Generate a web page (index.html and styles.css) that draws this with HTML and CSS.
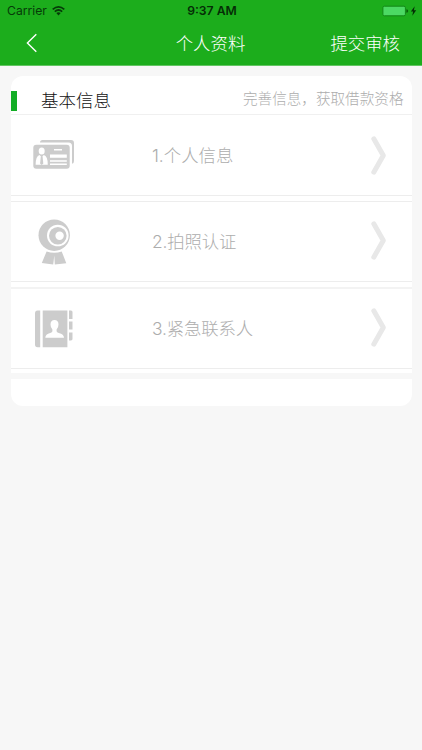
FILE: index.html
```
<!DOCTYPE html>
<html lang="zh-CN">
<head>
<meta charset="utf-8">
<title>个人资料</title>
<link rel="stylesheet" href="styles.css">
</head>
<body>
<header class="top">
  <div class="status">
    <div class="carrier"><span>Carrier</span>
      <svg width="13" height="10" viewBox="0 0 13 10" fill="none" stroke="#063b08" stroke-width="1.7"><path d="M.7 3.4Q6.5-1.6 12.3 3.4M2.8 5.6Q6.5 2.4 10.2 5.6"/><path d="M6.5 9.4 4.3 7.1Q6.5 5.3 8.7 7.1Z" fill="#063b08" stroke="none"/></svg>
    </div>
    <div class="time">9:37 AM</div>
    <svg class="battery" width="35" height="12" viewBox="0 0 35 12"><rect x=".9" y="1.2" width="22.5" height="9.6" rx="1.5" fill="#4cd964" stroke="#138718"/><path d="M24.4 4.2q1.8.3 1.8 1.8t-1.8 1.8z" fill="#075d0b"/><path d="M32.7 1.3 28.9 6.6h2.2l-.8 4.1 3.9-5.5h-2.3z" fill="#052d06"/></svg>
  </div>
  <nav class="nav">
    <svg class="back" width="12" height="20" viewBox="0 0 12 20" fill="none" stroke="#fff" stroke-width="1.4"><path d="M10.3 1.2 1.4 10l8.9 8.8"/></svg>
    <h1>个人资料</h1>
    <span class="submit">提交审核</span>
  </nav>
</header>
<main class="card">
  <div class="heading">
    <i class="mark"></i>
    <h2>基本信息</h2>
    <span class="hint">完善信息，获取借款资格</span>
  </div>
  <section class="row">
    <div class="icon"><svg width="42" height="32" viewBox="0 0 42 32"><path d="M7 3.5Q7 1 9.5 1H38q3 0 3 3v18q0 2.5-2 2.8V7q0-3.5-3.5-3.5z" fill="#ccc"/><rect x=".3" y="5.8" width="36.4" height="24" rx="3" fill="#ccc"/><g fill="#fff"><ellipse cx="8.7" cy="12.1" rx="3" ry="3.5"/><path d="M2.6 25.8q0-8.6 4-9.8l2.1 2.2 2.1-2.2q4 1.2 4 9.8z"/><path d="M21 10h8v1.6h-8zM17 15.4h16.8v3.4H17zM17 21.2h16.8v1.5H17zM17 24.5h16.8V26H17z"/></g><path d="m7.8 17.4-.7 7.2 1.6 1.3 1.6-1.3-.7-7.2z" fill="#ccc"/></svg></div>
    <span class="label">1.个人信息</span>
    <svg class="arrow" width="16" height="39" viewBox="0 0 16 39"><path d="m2.8 2.8 9.5 16.7-9.5 16.7"/></svg>
  </section>
  <section class="row second">
    <div class="icon"><svg width="42" height="46" viewBox="0 0 42 46"><circle cx="21.2" cy="16.2" r="15.7" fill="#ccc"/><circle cx="24.8" cy="16.5" r="10.8" fill="#fff"/><circle cx="24.8" cy="16.7" r="8.8" fill="#ccc"/><circle cx="26.6" cy="16.7" r="4.2" fill="#fff"/><path d="M13.6 32.4q7.7 2.6 15.1 0l4.6 11.8-11.5 1.2-.5-9-1.1 9L8.8 44z" fill="#ccc"/></svg></div>
    <span class="label">2.拍照认证</span>
    <svg class="arrow" width="16" height="39" viewBox="0 0 16 39"><path d="m2.8 2.8 9.5 16.7-9.5 16.7"/></svg>
  </section>
  <section class="row third">
    <div class="icon"><svg width="42" height="38" viewBox="0 0 42 38"><g fill="#ccc"><path d="M7.2.5v36.8H4.5Q2 37.3 2 34.5V3.5Q2 .5 4.5.5zM9.7.5h24.7v36.8H9.7zM36 .5h2q1.5 0 1.5 1.5v7H36zM36 11.6h3.5v8H36zM36 22.6h3.5v6.5q0 1.4-1.5 1.4h-2z"/></g><path d="M21.5 10q4 0 4 4.6 0 3.1-1.9 5v1.6q0 1 2.2 1.7 5.2 1.2 5.2 4.9H12.3q0-3.7 4.9-4.9 2.2-.7 2.2-1.7v-1.6q-1.9-1.9-1.9-5 0-4.6 4-4.6z" fill="#fff"/></svg></div>
    <span class="label">3.紧急联系人</span>
    <svg class="arrow" width="16" height="39" viewBox="0 0 16 39"><path d="m2.8 2.8 9.5 16.7-9.5 16.7"/></svg>
  </section>
  <div class="band"></div>
</main>
</body>
</html>
```
FILE: styles.css
```
* { box-sizing: border-box; }
body { margin: 0; min-height: 750px; background: #f7f7f7; font-family: "Noto Sans CJK SC", sans-serif; font-weight: 300; }
svg { display: block; flex: none; }
h1, h2 { margin: 0; font-weight: 300; }
.top { height: 66px; background: #1cad1c; border-bottom: 1px solid #62c562; color: #fff; }
.status { display: grid; grid-template-columns: 1fr auto 1fr; align-items: center; height: 22px; padding: 0 5px 0 7px; font: 12.2px/22px Inter, sans-serif; color: #063b08; }
.carrier { display: flex; align-items: center; gap: 5px; }
.time { font-weight: 600; font-size: 12.2px; color: #052d06; }
.battery { justify-self: end; }
.nav { display: grid; grid-template-columns: 1fr auto 1fr; align-items: center; height: 42px; padding: 0 22px 0 26px; font-size: 17.4px; line-height: 42px; }
.nav h1 { margin-left: -5px; font-size: 17.4px; }
.submit { justify-self: end; }
.card { margin: 10px 10.5px 0; height: 329.5px; border-radius: 12px; background: #fff; overflow: hidden; }
.heading { display: flex; height: 39px; border-bottom: 1px solid #f0f0f0; }
.mark { width: 6px; height: 20px; margin-top: 15px; background: #12ad25; }
.heading h2 { margin-left: 24.5px; font-size: 17.5px; line-height: 48px; color: #111; }
.hint { margin: 0 8px 0 auto; font-size: 14.6px; line-height: 44px; color: #adadad; }
.row { display: grid; grid-template-columns: 141.5px 1fr auto; align-items: center; height: 81px; padding-right: 25px; border-bottom: 1px solid #ededed; }
.second, .third { margin-top: 5px; border-top: 1px solid #ededed; }
.second .arrow { margin-bottom: 2px; }
.third { height: 82px; border-top: 2px solid #f3f3f3; }
.third .arrow { margin-bottom: 3px; }
.icon { padding-left: 22.5px; }
.label { padding-top: 2px; font-family: Inter, "Noto Sans CJK SC", sans-serif; font-size: 17.4px; line-height: 28px; color: #adadad; }
.second .label, .third .label { padding-top: 0; letter-spacing: -.15px; }
.arrow path { fill: none; stroke: #e8e8e8; stroke-width: 5; stroke-linecap: round; stroke-linejoin: round; }
.band { height: 6px; margin-top: 4px; background: #f7f7f7; }
```
